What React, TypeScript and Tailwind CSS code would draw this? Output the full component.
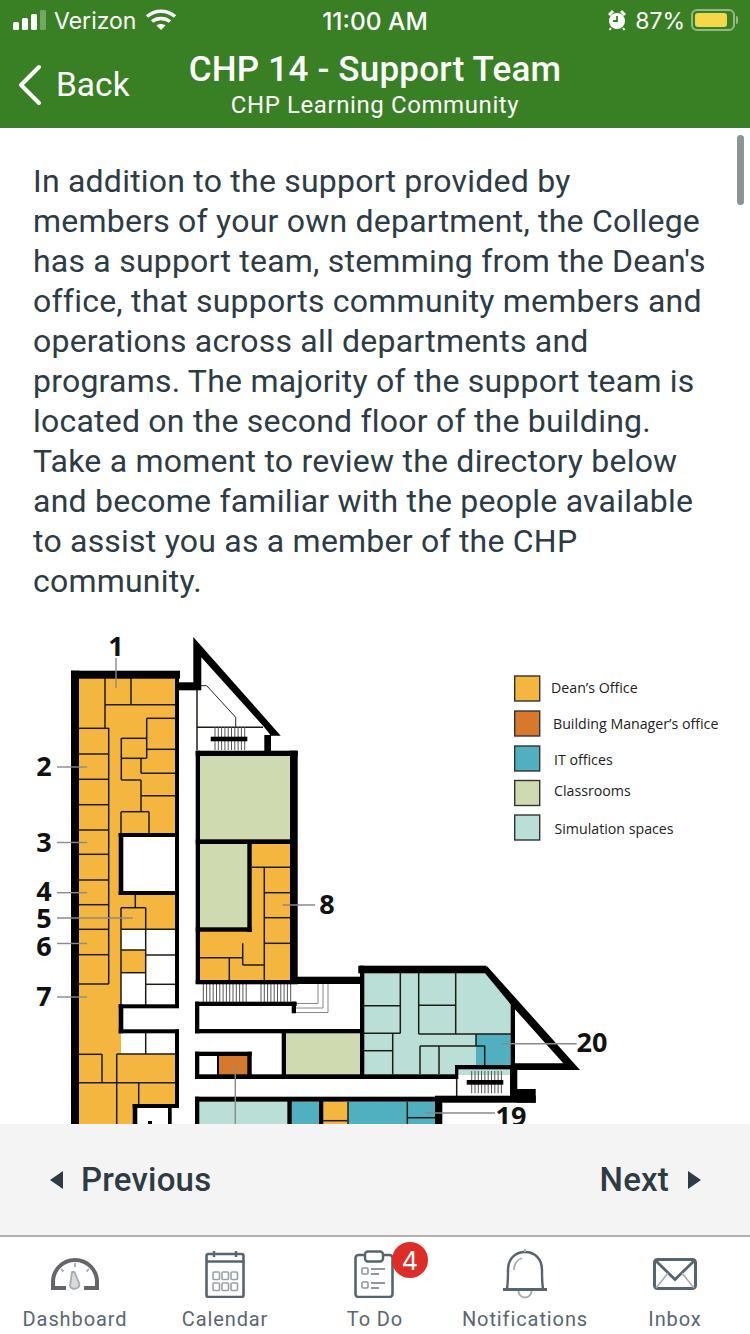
import React from "react";

const OR = "#f4b63f", DO = "#d7792b", GR = "#d0dab0", LT = "#badfd7", TE = "#50b0c0";

type L = [number, number, number, number];
const thin: L[] = [
  [105, 678, 105, 728], [79, 728.3, 108.7, 728.3], [108.7, 728, 108.7, 984], [131, 678, 131, 704.7], [105, 704.7, 175, 704.7],
  [146.7, 718.3, 175, 718.3], [146.7, 718.3, 146.7, 758.3], [121.3, 738.3, 146.7, 738.3], [121.3, 758.3, 146.7, 758.3],
  [146.7, 749.3, 175, 749.3], [141, 758, 141, 773.3], [141, 773.3, 175, 773.3], [121.3, 738, 121.3, 780], [121.3, 780, 141, 780],
  [141, 780, 141, 811.7], [141, 795.7, 175, 795.7], [121, 811.7, 149, 811.7], [121, 811.7, 121, 833], [149, 811.7, 149, 833],
  [79, 754, 108.7, 754], [79, 779.3, 108.7, 779.3], [79, 804.7, 108.7, 804.7], [79, 830, 108.7, 830], [79, 854.3, 108.7, 854.3],
  [79, 880, 108.7, 880], [79, 904.7, 108.7, 904.7], [79, 929.3, 108.7, 929.3], [79, 954.7, 108.7, 954.7], [79, 984, 108.7, 984],
  [135.3, 895, 135.3, 907.7], [121, 907.7, 145.7, 907.7], [121, 907.7, 121, 1005], [145.7, 907.7, 145.7, 1005], [121, 929.3, 175, 929.3],
  [121, 950, 145.7, 950], [121, 972.7, 145.7, 972.7], [145.7, 955, 175, 955], [145.7, 984.3, 175, 984.3],
  [145.7, 1033, 145.7, 1054], [116.7, 1054, 175, 1054], [116.7, 1054, 116.7, 1124], [102, 1054, 102, 1082.7], [79, 1054.3, 102, 1054.3],
  [79, 1082.7, 175, 1082.7], [138.7, 1083, 138.7, 1104],
  [264.3, 867.3, 264.3, 980], [251.7, 867.3, 290, 867.3], [264.3, 892.7, 290, 892.7], [264.3, 917.7, 290, 917.7], [264.3, 943.3, 290, 943.3],
  [242.7, 943.3, 242.7, 965], [242.7, 965, 264.3, 965], [200, 957.7, 242.7, 957.7], [229.3, 957.7, 229.3, 980],
  [197, 690, 197, 750], [197, 727.3, 263, 727.3],
  [400.3, 973, 400.3, 1033.3], [364, 1005.7, 400.3, 1005.7], [364, 1033.3, 400.3, 1033.3], [392.7, 1033.3, 392.7, 1074.3], [364, 1050.7, 392.7, 1050.7],
  [418.7, 973, 418.7, 1034], [455.7, 973, 455.7, 1034], [418.7, 1005.3, 455.7, 1005.3], [418.7, 1034, 511, 1034],
  [476, 1034, 476, 1046], [420, 1046, 485, 1046], [484.7, 1046, 484.7, 1065], [420, 1046, 420, 1074], [439, 1046, 439, 1074],
  [456.7, 1079, 456.7, 1096], [407.3, 1102, 407.3, 1124], [407.3, 1117.7, 435, 1117.7], [323.3, 1120.7, 347.3, 1120.7], [348, 1102, 348, 1124],
];
const leaders: L[] = [
  [116, 658, 116, 688], [57, 767, 87, 767], [57, 842.5, 87, 842.5], [57, 892.7, 87, 892.7], [57, 918, 132.7, 918], [57, 943.5, 87, 943.5],
  [57, 997, 87, 997], [282.7, 905, 315, 905], [501.7, 1043.7, 576.7, 1043.7], [425, 1113, 495, 1113], [235.3, 1063, 235.3, 1124],
];
const nums: [string, number, number][] = [
  ["1", 116, 656], ["2", 44, 776], ["3", 44, 852], ["4", 44, 901], ["5", 44, 928], ["6", 44, 956], ["7", 44, 1006],
  ["8", 327, 914], ["20", 592, 1052], ["19", 511, 1126],
];
const legend: [string, string, number, number, number][] = [
  [OR, "Dean’s Office", 676, 551, 692.7],
  [DO, "Building Manager’s office", 711, 553, 729.3],
  [TE, "IT offices", 746, 554, 764.7],
  [GR, "Classrooms", 780.5, 554, 796],
  [LT, "Simulation spaces", 815, 554.5, 834.3],
];
const black: [number, number, number, number][] = [
  [71, 670.7, 8, 454], [71, 670.7, 109, 8], [175, 678, 4, 330], [175, 682.3, 26, 8],
  [118.7, 833, 60, 4], [118.7, 833, 4.6, 62], [118.7, 891, 60.3, 4], [118.7, 1004.3, 60.3, 4], [118.7, 1004.3, 4.6, 29],
  [118.7, 1029.3, 60.3, 4], [175, 1029.3, 4, 78], [132.7, 1104, 46.3, 4], [132.7, 1104, 4.6, 20], [168, 1104, 3.7, 20], [148, 1121, 4, 3],
  [195.7, 750.7, 4.3, 233], [195.7, 750.7, 102, 5.3], [264.3, 735, 6.7, 20], [290, 750.7, 7.7, 233], [195.7, 839.3, 96, 4.7], [247.3, 844, 4.4, 88],
  [195.7, 927.3, 56, 4.4], [195.7, 980, 102, 4.3], [290, 976.7, 74, 7.3], [358.3, 965.7, 128, 7.6], [360, 965.7, 4.3, 113],
  [195, 1001.7, 101.7, 4.3], [291.7, 1001.7, 4.3, 11.6], [195, 1001.7, 4.3, 31.6], [195, 1029, 165, 4.3], [281.7, 1033, 4.3, 42],
  [195, 1074.3, 261.7, 4.7], [195, 1051.7, 56.7, 4.3], [247.3, 1051.7, 4.4, 25], [195, 1051.7, 4.3, 25], [217, 1054, 2, 22],
  [510.7, 1003, 4.3, 65], [455, 1065, 60, 4.3], [455, 1065, 3.3, 14], [510, 1065, 7.3, 35], [435, 1095.7, 100.7, 7], [517, 1089, 18.7, 13.7],
  [195, 1096.7, 240, 5], [435, 1096, 7.3, 28], [195, 1096.7, 4.3, 28], [287.3, 1100, 4.4, 24], [319, 1100, 4.3, 24],
  [210.7, 736.7, 36.6, 4.6], [466.7, 1080, 36.6, 4.7],
];

function FloorPlan() {
  const stair = (x0: number, x1: number, y0: number, y1: number) => {
    const out = [];
    for (let x = x0; x <= x1; x += 3.3) out.push(<line key={x} x1={x} x2={x} y1={y0} y2={y1} stroke="#555" strokeWidth="1" />);
    return out;
  };
  return (
    <svg viewBox="0 624 750 500" width="750" height="500" className="block">
      <rect x="78" y="678" width="98" height="446" fill={OR} />
      <rect x="123" y="836" width="52" height="56" fill="#fff" />
      <rect x="121" y="930" width="54" height="20" fill="#fff" />
      <rect x="145" y="950" width="30" height="23" fill="#fff" />
      <rect x="121" y="973" width="54" height="32" fill="#fff" />
      <rect x="123" y="1005" width="56" height="28" fill="#fff" />
      <rect x="121" y="1033" width="54" height="21" fill="#fff" />
      <rect x="137" y="1108" width="39" height="16" fill="#fff" />

      <rect x="200" y="756" width="90" height="84" fill={GR} />
      <rect x="200" y="844" width="48" height="84" fill={GR} />
      <rect x="251" y="844" width="39" height="136" fill={OR} />
      <rect x="200" y="931" width="52" height="49" fill={OR} />
      <rect x="286" y="1033" width="74" height="42" fill={GR} />
      <rect x="219" y="1056" width="29" height="19" fill={DO} />

      <polygon points="364,973 485,973 511,1003 511,1075 364,1075" fill={LT} />
      <rect x="476" y="1034" width="35" height="31" fill={TE} />
      <rect x="199" y="1102" width="88" height="22" fill={LT} />
      <rect x="291" y="1102" width="28" height="22" fill={TE} />
      <rect x="323" y="1102" width="25" height="22" fill={OR} />
      <rect x="348" y="1102" width="87" height="22" fill={TE} />

      {thin.map(([a, b, c, d], i) => (
        <line key={i} x1={a} y1={b} x2={c} y2={d} stroke="#1c1c12" strokeWidth="1.5" />
      ))}
      <polyline points="197,685.7 206.7,685.7 235.7,717.3 235.7,727.3" fill="none" stroke="#222" strokeWidth="1" />
      {stair(215, 245, 727, 750)}
      {stair(203.3, 248.3, 984, 1002)}
      {stair(261, 293.3, 984, 1002)}
      {stair(471.7, 501.7, 1071, 1093.3)}
      <polyline points="318,984 318,1003.5 296,1003.5" fill="none" stroke="#888" strokeWidth="1" />
      <polyline points="323,984 323,1008 296,1008" fill="none" stroke="#888" strokeWidth="1" />
      <polyline points="328,984 328,1012.5 293,1012.5" fill="none" stroke="#888" strokeWidth="1" />
      {black.map(([x, y, w, h], i) => (
        <rect key={i} x={x} y={y} width={w} height={h} fill="#000" />
      ))}
      <polygon points="193.3,637 280.7,735.7 271,735.7 264.3,727.3 201.3,657.3 201.3,690 193.3,690" fill="#000" />
      <path d="M486.7 965.7 L580 1070 L513 1070 L513 1063.3 L563.3 1063.3 L512 1006 L485 973.3 Z" fill="#000" />

      {leaders.map(([a, b, c, d], i) => (
        <line key={i} x1={a} y1={b} x2={c} y2={d} stroke="#8a8a8a" strokeWidth="1.4" />
      ))}
      {nums.map(([t, x, y]) => (
        <text key={t} x={x} y={y} textAnchor="middle" fontFamily="'Open Sans', sans-serif" fontWeight="700" fontSize="27" fill="#111">
          {t}
        </text>
      ))}
      {legend.map(([c, t, sy, tx, ty]) => (
        <g key={t}>
          <rect x="514.7" y={sy} width="25" height="25" fill={c} stroke="#333" strokeWidth="1.4" />
          <text x={tx} y={ty} fontFamily="'Open Sans', sans-serif" fontSize="14.2" fill="#222">
            {t}
          </text>
        </g>
      ))}
    </svg>
  );
}

function Tab({ label, children }: { label: string; children: React.ReactNode }) {
  return (
    <div className="flex flex-col items-center w-[150px]">
      <div className="relative h-[52px] w-[60px] flex items-center justify-center">{children}</div>
      <span className="mt-[7px] text-[20px] leading-[24px] tracking-[0.9px] text-[#5a6670] whitespace-nowrap">{label}</span>
    </div>
  );
}

export default function App() {
  const ink = "#56646f";
  const soft = "#a8adb2";
  return (
    <div className="w-[750px] h-[1334px] flex flex-col bg-white overflow-hidden" style={{ fontFamily: "Roboto, 'Liberation Sans', sans-serif" }}>
      <header className="h-[128px] shrink-0 bg-[#398024] text-white relative">
        <div className="h-[42px] flex items-center justify-between pl-[13px] pr-[12px] text-[24px]" style={{ fontFamily: "Inter, sans-serif" }}>
          <div className="flex items-center gap-[8px]">
            <svg width="33" height="24" viewBox="0 0 33 24" className="-mt-[2px]">
              <rect x="0" y="14" width="6" height="8" rx="1.5" fill="#fff" />
              <rect x="9" y="10" width="6" height="12" rx="1.5" fill="#fff" />
              <rect x="18" y="6" width="6" height="16" rx="1.5" fill="#fff" />
              <rect x="27" y="2" width="6" height="20" rx="1.5" fill="#fff" fillOpacity=".3" />
            </svg>
            <span className="text-[23px] mr-[1px]">Verizon</span>
            <svg width="32" height="24" viewBox="0 0 32 24" fill="none" stroke="#fff" strokeWidth="3.4" className="-mt-[2px]">
              <path d="M2 8.5 C10 1.5 22 1.5 30 8.5" />
              <path d="M7 13.5 C12 9.5 20 9.5 25 13.5" />
              <path d="M16 22 L11.5 17.5 C14 15.5 18 15.5 20.5 17.5 Z" fill="#fff" stroke="none" />
            </svg>
          </div>
          <span className="absolute left-0 right-0 text-center text-[24.5px] font-medium">11:00 AM</span>
          <div className="flex items-center gap-[8px] relative">
            <svg width="20" height="22" viewBox="0 0 20 22" className="-mt-[2px]">
              <circle cx="10" cy="12" r="8" fill="#fff" />
              <path d="M10 7 V12 H6" stroke="#398024" strokeWidth="1.8" fill="none" />
              <path d="M2 6 L6 2 M18 6 L14 2" stroke="#fff" strokeWidth="3" />
              <path d="M4 19 L2.5 21 M16 19 L17.5 21" stroke="#fff" strokeWidth="2" />
            </svg>
            <span className="text-[23px] mr-[-2px]">87%</span>
            <div className="flex items-center -mt-[3px]">
              <div className="w-[44px] h-[22px] rounded-[6px] border-2 border-white/45 p-[2px]">
                <div className="w-[32px] h-full rounded-[3px] bg-[#f7d74a]" />
              </div>
              <div className="ml-[1px] w-[2px] h-[8px] bg-white/45 rounded-r-[2px]" />
            </div>
          </div>
        </div>
        <div className="absolute left-[15px] top-[63px] flex items-center gap-[13px]">
          <svg width="28" height="44" viewBox="0 0 28 44" fill="none" stroke="#fff" strokeWidth="4" strokeLinecap="round" strokeLinejoin="round">
            <path d="M24 4 L6 22 L24 40" />
          </svg>
          <span className="text-[33.5px] leading-[44px]">Back</span>
        </div>
        <div className="absolute left-0 right-0 top-[48px] text-center">
          <div className="text-[35px] leading-[44px] font-medium tracking-[0.2px]">CHP 14 - Support Team</div>
          <div className="text-[24px] leading-[28px] tracking-[0.6px] -mt-[1px]">CHP Learning Community</div>
        </div>
      </header>

      <main className="flex-1 relative overflow-hidden">
        <div className="absolute right-[6px] top-[7px] w-[7px] h-[70px] rounded-full bg-[#8e9398]" />
        <p className="pl-[33px] pr-[37px] pt-[33px] text-[32px] leading-[40px] tracking-[0.22px] text-[#2d3b45]">
          In addition to the support provided by members of your own department, the College has a support team, stemming from the Dean's office, that supports community members and operations across all departments and programs. The majority of the support team is located on the second floor of the building. Take a moment to review the directory below and become familiar with the people available to assist you as a member of the CHP community.
        </p>
        <div className="mt-[23px]">
          <FloorPlan />
        </div>
      </main>

      <nav className="h-[111px] shrink-0 bg-[#f4f4f4] flex items-center justify-between pl-[50px] pr-[49px] text-[#2d3b45] text-[33px] tracking-[0.2px] font-medium">
        <div className="flex items-center gap-[18px]">
          <svg width="13" height="18" viewBox="0 0 13 18"><path d="M13 0 V18 L0 9 Z" fill="#2d3b45" /></svg>
          <span>Previous</span>
        </div>
        <div className="flex items-center gap-[19px]">
          <span>Next</span>
          <svg width="13" height="18" viewBox="0 0 13 18"><path d="M0 0 V18 L13 9 Z" fill="#2d3b45" /></svg>
        </div>
      </nav>

      <footer className="h-[99px] shrink-0 bg-white border-t-2 border-[#b0b0b0] flex justify-between pt-[11px]">
        <Tab label="Dashboard">
          <svg width="50" height="36" viewBox="0 0 50 36" fill="none">
            <path d="M16 32 H3 V26 A22 22 0 0 1 47 26 V32 H34" stroke="#636569" strokeWidth="4" />
            <path d="M25 7 V11 M11 13 L13.5 15.5 M39 13 L36.5 15.5" stroke={soft} strokeWidth="1.8" />
            <path d="M22 16 L24.5 16 L29.5 28 A5 5 0 0 1 20 30 Z" fill="#d9dbdd" stroke={soft} strokeWidth="1.8" strokeLinejoin="round" />
          </svg>
        </Tab>
        <Tab label="Calendar">
          <svg width="40" height="48" viewBox="0 0 40 48" fill="none">
            <rect x="1.5" y="4" width="37" height="43" rx="2" stroke={ink} strokeWidth="2.6" />
            <path d="M1.5 11.5 H38.5" stroke={ink} strokeWidth="2.6" />
            <path d="M9 1 V7 M31 1 V7" stroke={ink} strokeWidth="2.4" />
            {[8, 17, 26].flatMap((x) =>
              [22, 33].map((y) => <rect key={`${x}-${y}`} x={x} y={y} width="6.5" height="7.5" rx="1" stroke="#9aa1a7" strokeWidth="1.6" />)
            )}
          </svg>
        </Tab>
        <Tab label="To Do">
          <svg width="40" height="48" viewBox="0 0 40 48" fill="none" className="-ml-[2px]">
            <rect x="1.5" y="5" width="37" height="42" rx="3" stroke={ink} strokeWidth="2.6" />
            <rect x="11" y="1.5" width="18" height="10" rx="3" fill="#fff" stroke={ink} strokeWidth="2.4" />
            <rect x="8" y="18" width="6" height="6" rx="1" stroke="#8f979e" strokeWidth="1.6" />
            <rect x="8" y="32" width="6" height="6" rx="1" stroke="#8f979e" strokeWidth="1.6" />
            <path d="M17 19 H31 M17 24 H25 M17 33 H31 M17 38 H25" stroke="#8f979e" strokeWidth="1.8" />
          </svg>
          <span className="absolute -right-[23px] -top-[6px] w-[36px] h-[36px] rounded-full bg-[#de2d26] text-white text-[26px] flex items-center justify-center" style={{ fontFamily: "Inter, sans-serif" }}>
            4
          </span>
        </Tab>
        <Tab label="Notifications">
          <svg width="46" height="50" viewBox="0 0 46 50" fill="none">
            <path d="M5 40 C6 33 6 28 6 21 C6 10 13 3 23 3 C33 3 40 10 40 21 C40 28 40 33 41 40" stroke={ink} strokeWidth="2.4" />
            <path d="M1 40.5 H45" stroke={ink} strokeWidth="3.2" />
            <path d="M23 0 V3" stroke={soft} strokeWidth="2" />
            <path d="M12 21 C12 15 15 11 20 9" stroke={soft} strokeWidth="1.8" />
            <path d="M16.5 42 A6.5 6.5 0 0 0 29.5 42" stroke={soft} strokeWidth="2" />
          </svg>
        </Tab>
        <Tab label="Inbox">
          <svg width="44" height="32" viewBox="0 0 44 32" fill="none">
            <rect x="1.5" y="1.5" width="41" height="29" rx="3" stroke={ink} strokeWidth="3" />
            <path d="M3 3 L22 21.5 L41 3" stroke={ink} strokeWidth="2.8" />
            <path d="M3 30 L15 15 M41 30 L29 15" stroke={soft} strokeWidth="1.6" />
          </svg>
        </Tab>
      </footer>
    </div>
  );
}
